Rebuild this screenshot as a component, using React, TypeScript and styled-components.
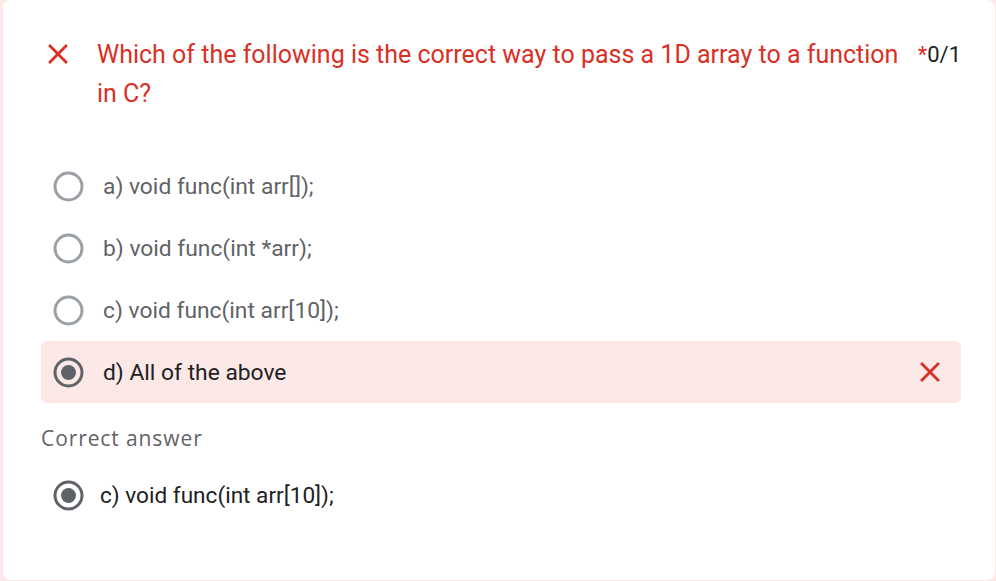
import styled, { createGlobalStyle } from "styled-components";

const GlobalStyle = createGlobalStyle`
  html, body {
    margin: 0;
    padding: 0;
    background: #fce8e6;
  }
  body {
    font-family: Roboto, "Liberation Sans", Arial, sans-serif;
  }
`;

type Option = {
  label: string;
  selected?: boolean;
  wrong?: boolean;
};

const options: Option[] = [
  { label: "a) void func(int arr[]);" },
  { label: "b) void func(int *arr);" },
  { label: "c) void func(int arr[10]);" },
  { label: "d) All of the above", selected: true, wrong: true },
];

const CloseIcon = ({ size = 34 }: { size?: number }) => (
  <svg width={size} height={size} viewBox="0 0 24 24" fill="#d93025">
    <path d="M19 6.41L17.59 5 12 10.59 6.41 5 5 6.41 10.59 12 5 17.59 6.41 19 12 13.41 17.59 19 19 17.59 13.41 12z" />
  </svg>
);

const Radio = ({ checked }: { checked?: boolean }) => (
  <svg width="31" height="31" viewBox="0 0 31 31">
    <circle
      cx="15.5"
      cy="15.5"
      r="13.5"
      fill="none"
      stroke={checked ? "#5f6368" : "#9aa0a6"}
      strokeWidth="3"
    />
    {checked && <circle cx="15.5" cy="15.5" r="7.5" fill="#5f6368" />}
  </svg>
);

const App = () => {
  return (
    <>
      <GlobalStyle />
      <Card>
        <Header>
          <HeaderIcon>
            <CloseIcon />
          </HeaderIcon>
          <Question>
            Which of the following is the correct way to pass a 1D array to a
            function in C?
          </Question>
          <Points>
            <Star>*</Star>0/1
          </Points>
        </Header>

        <OptionList>
          {options.map((o) => (
            <OptionRow key={o.label} $wrong={o.wrong}>
              <Radio checked={o.selected} />
              <OptionText $selected={o.selected}>{o.label}</OptionText>
              {o.wrong && (
                <RowMark>
                  <CloseIcon />
                </RowMark>
              )}
            </OptionRow>
          ))}
        </OptionList>

        <AnswerLabel>Correct answer</AnswerLabel>
        <AnswerRow>
          <Radio checked />
          <AnswerText>c) void func(int arr[10]);</AnswerText>
        </AnswerRow>
      </Card>
    </>
  );
};

export default App;

const Card = styled.div`
  box-sizing: border-box;
  margin: 0 1px 0 3px;
  height: 580px;
  background: #ffffff;
  border-radius: 8px;
  padding: 35px 34px 0 38px;
`;

const Header = styled.div`
  display: flex;
  align-items: flex-start;
`;

const HeaderIcon = styled.div`
  flex: none;
  width: 34px;
  height: 34px;
  margin-top: 2px;
  margin-right: 22px;
  display: flex;
`;

const Question = styled.div`
  flex: 1;
  font-size: 25px;
  line-height: 39px;
  color: #d93025;
  padding-right: 14px;
`;

const Points = styled.div`
  flex: none;
  font-size: 22px;
  line-height: 39px;
  color: #202124;
`;

const Star = styled.span`
  color: #d93025;
`;

const OptionList = styled.div`
  margin-top: 42px;
  display: flex;
  flex-direction: column;
`;

const OptionRow = styled.div<{ $wrong?: boolean }>`
  height: 62px;
  display: flex;
  align-items: center;
  gap: 19px;
  padding: 0 14px 0 12px;
  border-radius: 6px;
  background: ${(p) => (p.$wrong ? "#fce8e6" : "transparent")};
`;

const OptionText = styled.span<{ $selected?: boolean }>`
  flex: 1;
  font-size: 22.8px;
  color: ${(p) => (p.$selected ? "#202124" : "#5f6368")};
`;

const RowMark = styled.div`
  display: flex;
`;

const AnswerLabel = styled.div`
  margin-top: 23px;
  font-family: "Open Sans", Roboto, sans-serif;
  font-size: 21px;
  letter-spacing: 0.9px;
  line-height: 24px;
  color: #5f6368;
`;

const AnswerRow = styled.div`
  margin-top: 21px;
  height: 48px;
  display: flex;
  align-items: center;
  gap: 16px;
  padding-left: 12px;
`;

const AnswerText = styled.span`
  font-size: 22.6px;
  color: #202124;
`;
